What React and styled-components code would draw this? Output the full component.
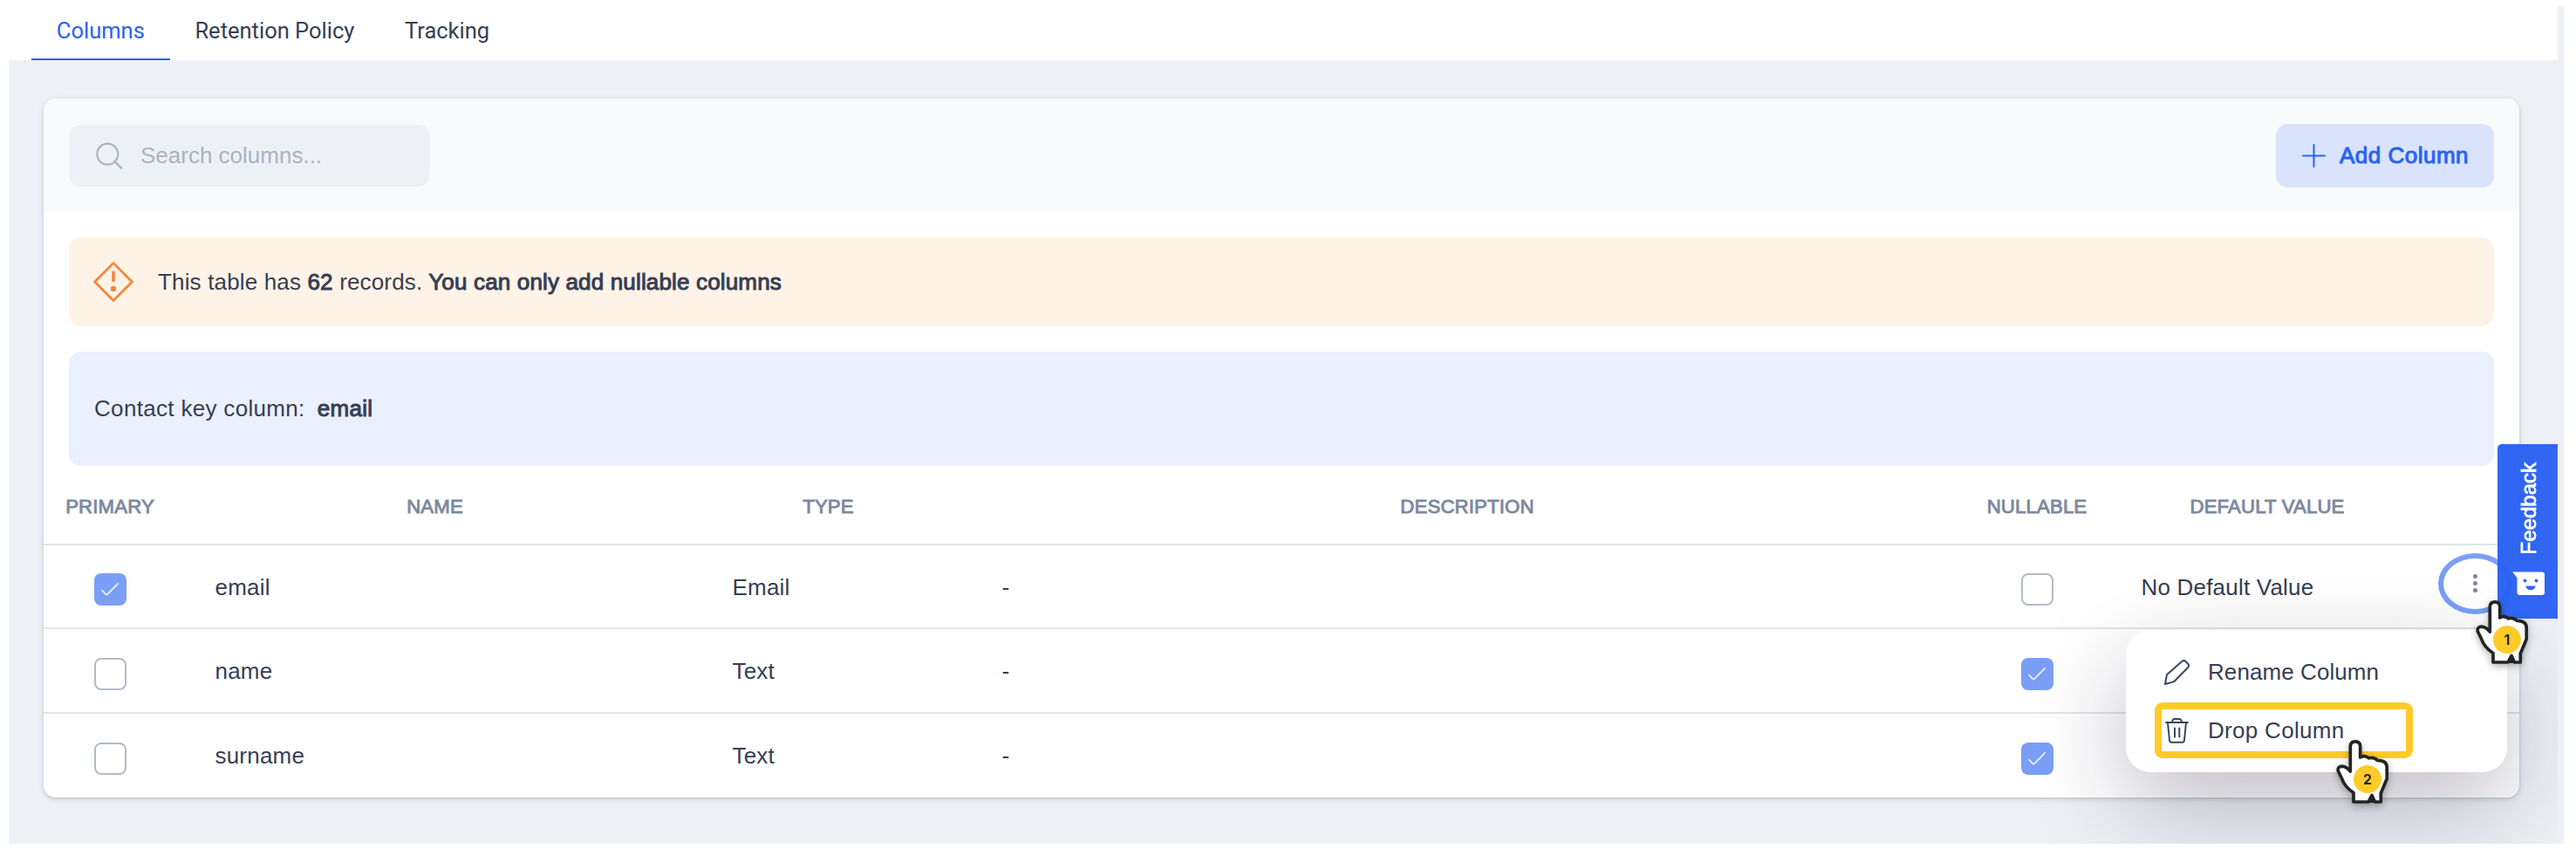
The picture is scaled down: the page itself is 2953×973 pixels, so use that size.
import React from 'react'

import styled, { createGlobalStyle } from 'styled-components'

const tabs = ['Columns', 'Retention Policy', 'Tracking']

const headings = ['Primary', 'Name', 'Type', 'Description', 'Nullable', 'Default value', '']

const columns = [
    { name: 'email', type: 'Email', primary: true, nullable: false, defaultValue: 'No Default Value' },
    { name: 'name', type: 'Text', primary: false, nullable: true },
    { name: 'surname', type: 'Text', primary: false, nullable: true },
]

const SearchIcon = () => (
    <svg width="31" height="31" viewBox="0 0 31 31" fill="none" stroke="#a9b4c2" strokeWidth="2.2" strokeLinecap="round">
        <ellipse cx="13.3" cy="13.6" rx="12" ry="12" />
        <path d="M21.8 22.4L29 29.6" />
    </svg>
)

const PlusIcon = () => (
    <svg width="27" height="27" viewBox="0 0 27 27" stroke="#2962f4" strokeWidth="2" strokeLinecap="round">
        <path d="M13.5 1V26M1 13.5H26" />
    </svg>
)

const WarningIcon = () => (
    <svg width="46" height="46" viewBox="0 0 46 46" fill="none" stroke="#f5873a" strokeWidth="2.8" strokeLinejoin="round">
        <path d="M23 1.6L44.4 23L23 44.4L1.6 23Z" />
        <path d="M23 12V21.5" strokeWidth="3.6" strokeLinecap="round" />
        <circle cx="23" cy="31" r="3.2" fill="#f5873a" stroke="none" />
    </svg>
)

const CheckIcon = () => (
    <svg width="20" height="15" viewBox="0 0 20 15" fill="none" stroke="#e9effd" strokeWidth="1.8" strokeLinecap="round" strokeLinejoin="round">
        <path d="M1 8.6L5.6 13.4Q6.2 13.9 6.8 13.4L19 1" />
    </svg>
)

const PencilIcon = () => (
    <svg width="29" height="29" viewBox="0 0 29 29" fill="none" stroke="#3a4560" strokeWidth="2" strokeLinejoin="round">
        <path d="M1 28L2.8 18.2Q3 17.3 3.8 16.5L19.7 2.4Q22.2 0 24.7 2.2L27 4.5Q29.2 7 26.9 9.3L12.4 24Q11.3 25.2 9.9 25.6Z" />
    </svg>
)

const TrashIcon = () => (
    <svg width="29" height="29" viewBox="0 0 29 29" fill="none" stroke="#3a4560" strokeWidth="2" strokeLinecap="round" strokeLinejoin="round">
        <path d="M2 5H27M9 5Q9.3 1 11.8 1H17.2Q19.7 1 20 5" />
        <path d="M4 5L6 25.3Q6.3 27.8 8.8 27.8H20.2Q22.7 27.8 23 25.3L25 5" />
        <path d="M12 11.6V21.4M17.3 11.6V21.4" />
    </svg>
)

const SmileIcon = () => (
    <svg width="38" height="28" viewBox="0 0 38 28" fill="#fff">
        <path d="M0 .5H34Q37 .5 37 3.5V24Q37 27 34 27H8.5Q5.5 27 5.5 24V7.5Q4.5 5.5 0 .5Z" />
        <circle cx="14.5" cy="10.5" r="1.9" fill="#2d64f3" />
        <circle cx="27.5" cy="10.5" r="1.9" fill="#2d64f3" />
        <path d="M15.3 16.5H26.7Q25.5 21.2 21 21.2T15.3 16.5Z" fill="#2d64f3" />
    </svg>
)

const Pointer = ({ step, x, y }) => (
    <PointerFrame x={x} y={y}>
        <svg width="64" height="77" viewBox="0 0 64 77">
            <path
                d="M18.3 38V9.5Q18.3 3.8 24 3.8T29.7 9.5V22Q34.5 18.8 39.5 22.8Q45 21 49.5 25.3Q60 25.5 60.2 33V46.5L53.3 63V73H46.5L43 65.5L39 73H22V62.5Q11.5 55.5 8.5 46L4.3 37.5Q3.5 32.5 8.5 32.2Q13.5 32.3 18.3 38Z"
                fill="#fff"
                stroke="#222523"
                strokeWidth="3.7"
                strokeLinejoin="round"
            />
            <path d="M38.5 74L43 64.5L47.2 74Z" fill="#222523" />
        </svg>
        <Step>{step}</Step>
    </PointerFrame>
)

export default function App() {
    return (
        <Page>
            <Reset />
            <Screen>
                <Tabs>
                    {tabs.map((tab, idx) => <Tab key={tab} active={idx === 0 ? 1 : 0}>{tab}</Tab>)}
                </Tabs>
                <Card>
                    <Toolbar>
                        <Search>
                            <SearchIcon />
                            Search columns...
                        </Search>
                        <AddButton>
                            <PlusIcon />
                            Add Column
                        </AddButton>
                    </Toolbar>
                    <Notices>
                        <Warning>
                            <WarningIcon />
                            <p>This table has <Strong>62</Strong> records. <Strong>You can only add nullable columns</Strong></p>
                        </Warning>
                        <KeyColumn>
                            Contact key column:
                            <Strong>email</Strong>
                        </KeyColumn>
                    </Notices>
                    <HeadRow>
                        {headings.map((heading, idx) => <Heading key={idx}>{heading}</Heading>)}
                    </HeadRow>
                    {columns.map((column, idx) => (
                        <Row key={column.name}>
                            <CheckCell><Checkbox checked={column.primary}>{column.primary && <CheckIcon />}</Checkbox></CheckCell>
                            <Cell>{column.name}</Cell>
                            <Cell>{column.type}</Cell>
                            <Cell>-</Cell>
                            <CheckCell><Checkbox checked={column.nullable}>{column.nullable && <CheckIcon />}</Checkbox></CheckCell>
                            <Cell>{column.defaultValue}</Cell>
                            {idx === 0 && <MoreButton><Dot /><Dot /><Dot /></MoreButton>}
                        </Row>
                    ))}
                </Card>
                <Menu>
                    <MenuItem><PencilIcon />Rename Column</MenuItem>
                    <MenuItem spacing="0.3px"><TrashIcon />Drop Column</MenuItem>
                    <Highlight />
                </Menu>
                <Feedback>
                    <FeedbackText>Feedback</FeedbackText>
                    <SmileIcon />
                </Feedback>
                <Pointer step={1} x={2826} y={686} />
                <Pointer step={2} x={2666} y={846} />
            </Screen>
        </Page>
    )
}

const Reset = createGlobalStyle`

    * {
        box-sizing: border-box;
    }

    body {
        margin: 0;
        background: white;
    }

    p {
        margin: 0;
    }

    svg {
        display: block;
        flex: none;
    }

`

const Page = styled.div`

    width: 2939px;
    height: 967px;
    padding: 0 7px 0 10px;

    background: linear-gradient(white, white) 0 0 / 10px 100% no-repeat,
        linear-gradient(white, white) 0 0 / 100% 7px no-repeat,
        #edf1f5;

    color: #353e54;
    font-family: "Liberation Sans", Arial, sans-serif;
    font-size: 26px;
    letter-spacing: 0.2px;

`

const Screen = styled.div`

    position: relative;
    height: 100%;
    overflow: hidden;

    display: flex;
    flex-direction: column;

    background: #edf1f5;

`

const Tabs = styled.div`

    height: 69px;
    padding-left: 26px;

    display: flex;

    background: white;

`

const Tab = styled.div`

    padding: 0 28.8px;

    display: flex;
    align-items: center;

    color: ${props => props.active ? '#2962f4' : '#353e54' };
    font-family: Roboto, sans-serif;
    font-size: 25.5px;
    letter-spacing: 0;
    box-shadow: ${props => props.active ? 'inset 0 -2px #2962f4' : 'none' };

`

const Card = styled.div`

    width: 2838px;
    height: 801px;
    margin: 44px 0 0 40px;

    display: flex;
    flex-direction: column;

    background: white;
    border-radius: 14px;
    box-shadow: 0 1px 3px rgba(30, 35, 60, 0.14), 0 2px 7px rgba(30, 35, 60, 0.13);

`

const Toolbar = styled.div`

    height: 130px;
    padding: 0 29px;

    display: flex;
    justify-content: space-between;
    align-items: center;

    background: #f9fafc;
    border-radius: 14px 14px 0 0;

`

const Search = styled.div`

    width: 414px;
    height: 71px;
    padding-left: 31px;

    display: flex;
    align-items: center;
    gap: 20px;

    background: #edf1f5;
    border-radius: 14px;

    color: #a9b4c2;
    letter-spacing: 0;

`

const AddButton = styled.div`

    width: 250px;
    height: 73px;
    padding-left: 1px;

    display: flex;
    justify-content: center;
    align-items: center;
    gap: 16px;

    background: #d9e3fc;
    border-radius: 14px;

    color: #2962f4;
    letter-spacing: 0.5px;
    -webkit-text-stroke: 1px #2962f4;

`

const Notices = styled.div`

    padding: 29px 29px 0;

    display: flex;
    flex-direction: column;
    gap: 29px;

`

const Notice = styled.div`

    display: flex;
    align-items: center;

    border-radius: 14px;

`

const Warning = styled(Notice)`

    height: 102px;
    padding-left: 28px;
    gap: 28px;

    background: #fef3e6;
    letter-spacing: 0.16px;

`

const KeyColumn = styled(Notice)`

    height: 131px;
    padding-left: 29px;
    gap: 14px;

    background: #eaf0fd;
    letter-spacing: 0.32px;

`

const Strong = styled.span`
    -webkit-text-stroke: 1px #353e54;
`

const HeadRow = styled.div`

    height: 91.3px;
    padding-top: 4px;

    display: grid;
    grid-template-columns: 152px 593px 309px 1156px 150px 378px 100px;
    align-items: center;

    border-bottom: 2px solid #dfe5eb;

`

const Heading = styled.div`

    color: #7c899e;
    font-size: 22.2px;
    letter-spacing: 0.15px;
    text-align: center;
    text-transform: uppercase;
    -webkit-text-stroke: 0.9px #7c899e;

`

const Row = styled.div`

    height: 96.2px;

    display: grid;
    grid-template-columns: 152px 593px 309px 1156px 150px 378px 100px;
    align-items: center;

    border-bottom: 2px solid #dfe5eb;

    &:last-child {
        border-bottom: none;
    }

`

const Cell = styled.div`
    padding-top: 2px;
    padding-left: 44.5px;
`

const CheckCell = styled.div`

    padding-top: 7px;

    display: flex;
    justify-content: center;

`

const Checkbox = styled.div`

    width: 37px;
    height: 37px;

    display: flex;
    justify-content: center;
    align-items: center;

    background: ${props => props.checked ? '#7b9ff7' : 'white' };
    border: ${props => props.checked ? 'none' : '2px solid #b2bac7' };
    border-radius: 8px;

`

const MoreButton = styled.div`

    width: 85px;
    height: 70px;
    margin-top: -7px;
    margin-left: 7px;

    display: flex;
    flex-direction: column;
    justify-content: center;
    align-items: center;
    gap: 3px;

    border: 6px solid #7b9ff5;
    border-radius: 50%;

`

const Dot = styled.div`

    width: 5px;
    height: 5px;

    background: #7c899e;
    border-radius: 50%;

`

const Menu = styled.div`

    position: absolute;
    top: 722px;
    left: 2427px;

    width: 437px;
    height: 163px;
    padding: 14.5px 44px;

    background: white;
    border-radius: 28px;
    box-shadow: 0 40px 110px rgba(25, 15, 45, 0.27);

`

const MenuItem = styled.div`

    height: 67px;

    display: flex;
    align-items: center;
    gap: 21px;

    letter-spacing: ${props => props.spacing || '0.08px' };

`

/* yellow frame over the item that the second step points at */
const Highlight = styled.div`

    position: absolute;
    top: 83px;
    left: 33px;

    width: 296px;
    height: 64px;

    border: 8px solid #ffcb2a;
    border-radius: 9px;

`

const Feedback = styled.div`

    position: absolute;
    top: 509px;
    right: 0;

    width: 69px;
    height: 200px;
    padding: 21px 0 26px 2px;

    display: flex;
    flex-direction: column;
    justify-content: space-between;
    align-items: center;

    background: rgba(41, 97, 243, 0.97);
    border-radius: 5px 0 0 0;

`

const FeedbackText = styled.div`

    color: white;
    font-size: 24px;
    letter-spacing: 0;
    line-height: 28px;
    writing-mode: vertical-rl;
    transform: rotate(180deg);
    -webkit-text-stroke: 0.8px white;

`

const PointerFrame = styled.div`

    position: absolute;
    top: ${props => props.y}px;
    left: ${props => props.x}px;

    filter: drop-shadow(0 3px 4px rgba(0, 0, 0, 0.3));

`

const Step = styled.div`

    position: absolute;
    top: 31px;
    left: 22px;

    width: 32px;
    height: 32px;

    display: flex;
    justify-content: center;
    align-items: center;

    background: #ffcb2a;
    border-radius: 50%;

    color: #2a2410;
    font-family: Inter, sans-serif;
    font-size: 16px;
    font-weight: 700;
    letter-spacing: 0;

`
